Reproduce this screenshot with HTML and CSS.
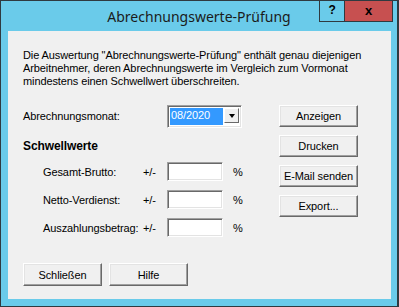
FILE: index.html
```html
<!DOCTYPE html>
<html lang="de">

<head>
    <meta charset="UTF-8">
    <title>Abrechnungswerte-Prüfung</title>
    <link rel="stylesheet" href="styles.css">
</head>

<body>
    <div class="window">
        <div class="titlebar">
            <div></div>
            <div class="title">Abrechnungswerte-Prüfung</div>
            <div class="caption-buttons">
                <div class="cap-btn help">?</div>
                <div class="cap-btn close">x</div>
            </div>
        </div>

        <div class="client">
            <p class="intro">
                Die Auswertung "Abrechnungswerte-Prüfung" enthält genau diejenigen<br>
                Arbeitnehmer, deren Abrechnungswerte im Vergleich zum Vormonat<br>
                mindestens einen Schwellwert überschreiten.
            </p>

            <div class="main">
                <div class="form">
                    <div class="month-row">
                        <label class="month-label">Abrechnungsmonat:</label>
                        <div class="combo">
                            <span class="combo-value">08/2020</span>
                            <span class="combo-arrow"><span class="arrow"></span></span>
                        </div>
                    </div>

                    <div class="section-title">Schwellwerte</div>

                    <div class="limit-row">
                        <label class="limit-label">Gesamt-Brutto:</label>
                        <span class="pm">+/-</span>
                        <div class="field"></div>
                        <span class="pct">%</span>
                    </div>
                    <div class="limit-row">
                        <label class="limit-label">Netto-Verdienst:</label>
                        <span class="pm">+/-</span>
                        <div class="field"></div>
                        <span class="pct">%</span>
                    </div>
                    <div class="limit-row">
                        <label class="limit-label">Auszahlungsbetrag:</label>
                        <span class="pm">+/-</span>
                        <div class="field"></div>
                        <span class="pct">%</span>
                    </div>
                </div>

                <div class="actions">
                    <button class="btn">Anzeigen</button>
                    <button class="btn">Drucken</button>
                    <button class="btn">E-Mail senden</button>
                    <button class="btn">Export...</button>
                </div>
            </div>

            <div class="footer">
                <button class="btn btn-wide">Schließen</button>
                <button class="btn btn-wide">Hilfe</button>
            </div>
        </div>
    </div>
</body>

</html>
```

FILE: styles.css
```css
html,
body {
    margin: 0;
    padding: 0;
}

body {
    font-family: 'Liberation Sans', Arial, sans-serif;
    font-size: 11px;
    letter-spacing: -0.1px;
    color: #000;
    background: #fff;
}

.window {
    width: 399px;
    height: 307px;
    box-sizing: border-box;
    background-color: #6acbea; /* title blue */
    border: 1px solid #2f3a40;
    border-right-width: 2px;
    display: flex;
    flex-direction: column;
    padding: 0 6px 7px 7px;
}

.titlebar {
    height: 30px;
    display: grid;
    grid-template-columns: 1fr auto 1fr;
    margin: 0 -6px 0 -7px;
}

.title {
    font-family: 'Noto Sans', sans-serif;
    font-size: 14px;
    letter-spacing: 0;
    color: #1b1b1b;
    line-height: 30px;
    padding-top: 1px;
}

.caption-buttons {
    display: flex;
    justify-self: end;
    align-self: start;
    margin-top: -1px;
    margin-right: 4px;
}

.cap-btn {
    height: 20px;
    border: 1px solid #2f3a40;
    box-sizing: content-box;
    text-align: center;
    font-weight: bold;
    font-size: 12px;
    line-height: 19px;
}

.help {
    width: 24px;
    border-right: none;
}

.close {
    width: 47px;
    background-color: #c75050;
    font-size: 13px;
}

.client {
    flex: 1;
    background-color: #f0f0f0;
    padding: 18px 0 0 15px;
}

.intro {
    margin: 0;
    line-height: 13px;
}

.main {
    display: flex;
    margin-top: 17px;
}

.form {
    width: 256px;
}

.month-row {
    display: flex;
    align-items: center;
    height: 22px;
}

.month-label {
    width: 144px;
}

.combo {
    width: 69px;
    height: 17px;
    margin-top: 1px;
    background: #fff;
    border: 1px solid;
    border-color: #a0a0a0 #fff #fff #a0a0a0;
    box-shadow: inset 1px 1px #696969, inset -1px -1px #e3e3e3;
    padding: 2px;
    display: flex;
    gap: 1px;
}

.combo-value {
    flex: 1;
    background-color: #3399ff;
    color: #fff;
    line-height: 15px;
    padding-left: 1px;
}

.combo-arrow {
    width: 13px;
    height: 13px;
    background: #f0f0f0;
    border: 1px solid;
    border-color: #fff #696969 #696969 #fff;
    display: flex;
    align-items: center;
    justify-content: center;
}

.arrow {
    width: 0;
    height: 0;
    border-left: 3px solid transparent;
    border-right: 3px solid transparent;
    border-top: 4px solid #000;
    margin-top: 1px;
}

.section-title {
    font-weight: bold;
    font-size: 12px;
    line-height: 13px;
    margin-top: 13px;
}

.limit-row {
    display: flex;
    align-items: center;
    height: 19px;
    padding-left: 20px;
    margin-top: 9px;
}

.limit-row:first-of-type {
    margin-top: 12px;
}

.limit-label {
    width: 100px;
}

.pm {
    width: 24px;
}

.field {
    width: 52px;
    height: 15px;
    background: #fff;
    border: 1px solid;
    border-color: #a0a0a0 #fff #fff #a0a0a0;
    box-shadow: inset 1px 1px #696969, inset -1px -1px #e3e3e3;
    padding: 1px;
}

.pct {
    margin-left: 10px;
}

.actions {
    display: flex;
    flex-direction: column;
    gap: 8px;
}

.btn {
    width: 79px;
    height: 22px;
    padding: 0;
    font-family: inherit;
    font-size: 11px;
    letter-spacing: -0.1px;
    color: #000;
    background-color: #f0f0f0;
    border: 1px solid;
    border-color: #fff #696969 #696969 #fff;
    box-shadow: inset -1px -1px #a0a0a0, inset 1px 1px #e3e3e3;
}

.btn-wide {
    height: 23px;
}

.footer {
    display: flex;
    gap: 7px;
    margin-top: 26px;
}
```
